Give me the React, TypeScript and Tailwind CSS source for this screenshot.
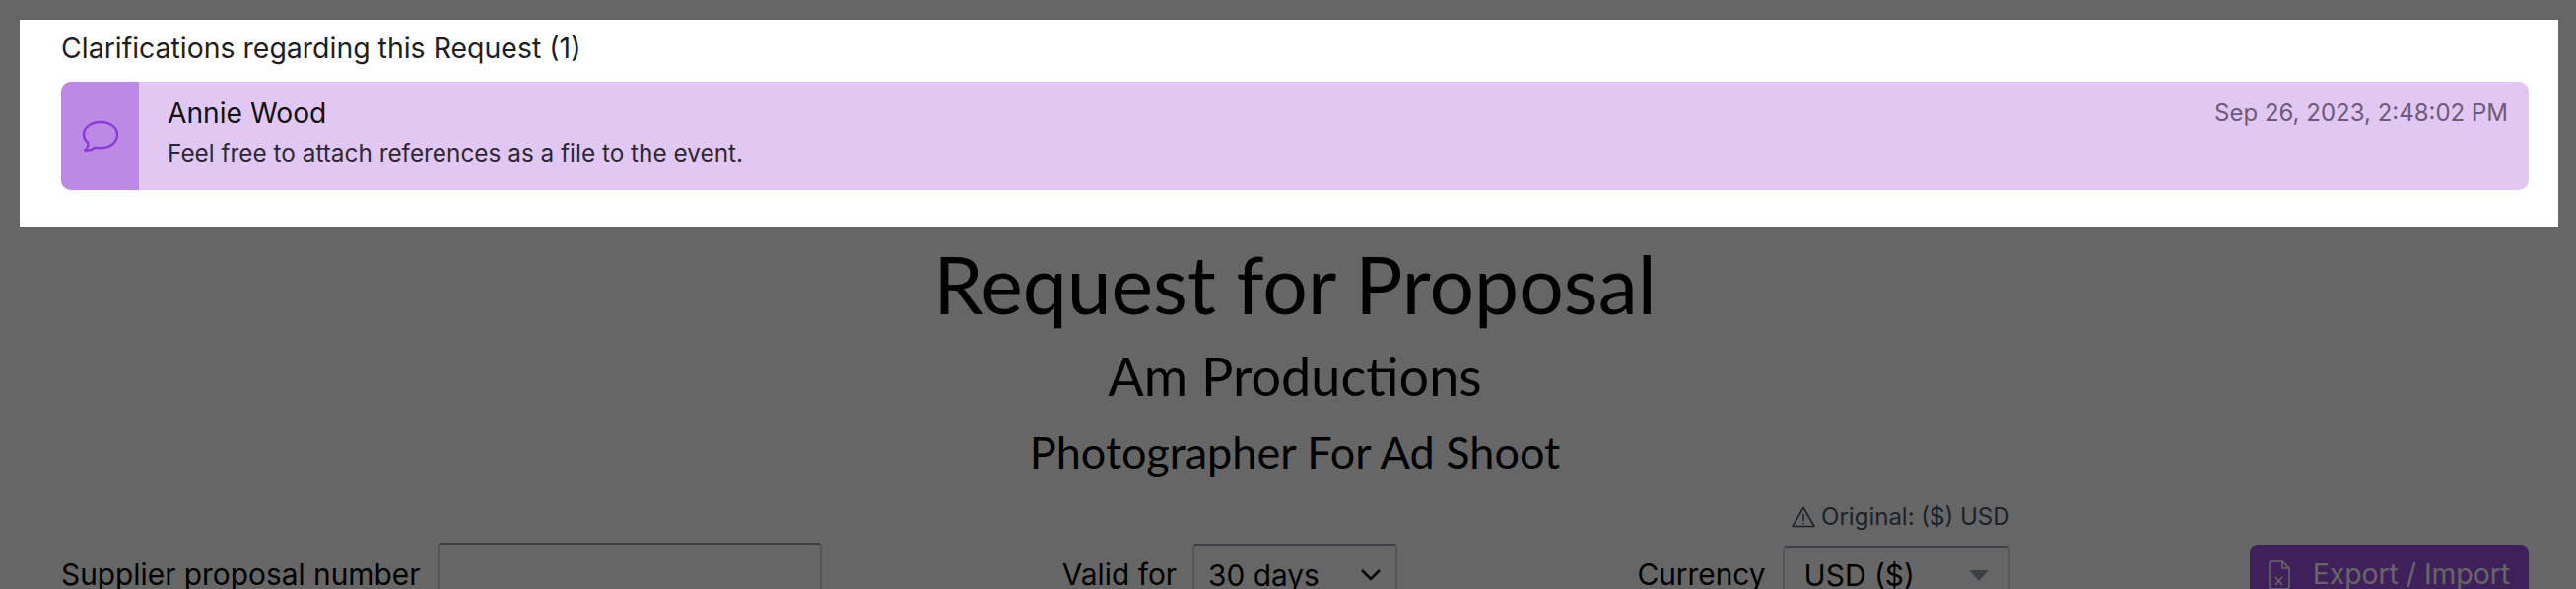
export default function App() {
  return (
    <div className="relative h-[598px] w-[2614px] overflow-hidden bg-white font-['Inter',sans-serif] text-black">
      <main className="pl-[62px] pr-[48px] pt-[242px]">
        <h1 className="text-center font-['Lato',sans-serif] text-[80.5px] leading-[92px]">Request for Proposal</h1>
        <h2 className="mt-[16px] text-center font-['Lato',sans-serif] text-[54px] leading-[64px]">Am Productions</h2>
        <h3 className="mt-[19px] text-center font-['Lato',sans-serif] text-[45px] leading-[52px]">Photographer For Ad Shoot</h3>
        <div className="mt-[25px] flex items-start justify-between">
          <div className="mt-[41px] flex items-start gap-[18px]">
            <span className="mt-[14px] text-[29.850px] leading-[36px]">Supplier proposal number</span>
            <input className="h-[64px] w-[390px] rounded border-2 border-gray-300 border-t-gray-400" />
          </div>
          <div className="mt-[42px] flex items-start gap-[16px]">
            <span className="mt-[13px] text-[29.850px] leading-[36px]">Valid for</span>
            <div className="flex h-[64px] w-[208px] items-center justify-between rounded border-2 border-gray-300 border-t-gray-400 pl-[14px] pr-[14px] text-[29.850px]">
              <span>30 days</span>
              <svg width="22" height="14" viewBox="0 0 22 14" fill="none" stroke="black" strokeWidth="2.5"><path d="M2 2l9 9 9-9" /></svg>
            </div>
          </div>
          <div className="flex flex-col items-end">
            <div className="flex h-[30px] items-center gap-[6px] text-[24px] text-gray-600">
              <svg width="24" height="22" viewBox="0 0 24 22" fill="none" stroke="currentColor" strokeWidth="1.6" strokeLinejoin="round"><path d="M12 1.500 23 20.500H1L12 1.500Z" /><path d="M12 8v7M12 17v1.500" /></svg>
              <span>Original: ($) USD</span>
            </div>
            <div className="mt-[14px] flex items-start gap-[17px]">
              <span className="mt-[11px] text-[29.850px] leading-[36px]">Currency</span>
              <div className="flex h-[60px] w-[231px] items-center justify-between rounded border-2 border-gray-300 border-t-gray-400 pl-[20px] pr-[20px] text-[29.850px]">
                <span>USD ($)</span>
                <span className="h-0 w-0 border-x-[10px] border-t-[11px] border-x-transparent border-t-gray-400" />
              </div>
            </div>
          </div>
          <button className="mt-[43px] flex h-[64px] w-[283px] items-start justify-between rounded-lg bg-[#9d50e1] pl-[19px] pr-[19px] pt-[16px] text-[28.300px] leading-[36px] text-white">
            <svg width="22" height="30" viewBox="0 0 22 30" fill="none" stroke="currentColor" strokeWidth="1.5" strokeLinejoin="round"><path d="M3 1h11l7 7v18a3 3 0 0 1-3 3H3a2 2 0 0 1-2-2V3a2 2 0 0 1 2-2Z" /><path d="M14 1v7h7M7 17l7 8M14 17l-7 8" /></svg>
            <span className="-mt-[4px]">Export / Import</span>
          </button>
        </div>
      </main>
      <div className="absolute inset-0 bg-black/60" />
      <section className="absolute left-[20px] top-[20px] h-[210px] w-[2576px] bg-white pl-[42px] pr-[30px] pt-[11px]">
        <h4 className="text-[28.450px] leading-[36px] text-[#1f1f1f]">Clarifications regarding this Request (1)</h4>
        <div className="mt-[16px] flex h-[110px] overflow-hidden rounded-[10px] bg-[#e1c8f3]">
          <div className="flex w-[79px] items-center justify-center bg-[#bc8ae6]">
            <svg width="38" height="33" viewBox="0 0 38 33" fill="none" stroke="#8a3ad6" strokeWidth="2.4" strokeLinejoin="round">
              <path d="M19 2C9.500 2 2 7.500 2 14.500c0 3.300 1.600 6.200 4.300 8.400.7 2.800-.6 5.600-3.200 7.600 3.800.6 7.800-.6 10.500-2.800 1.700.4 3.500.6 5.400.6 9.500 0 17-5.600 17-13.800C36 7.500 28.500 2 19 2Z" />
            </svg>
          </div>
          <div className="flex min-w-0 flex-1 justify-between pl-[29px] pr-[21px] pt-[14px]">
            <div>
              <div className="text-[28.200px] leading-[36px] text-[#111111]">Annie Wood</div>
              <div className="mt-[6px] text-[24.350px] leading-[32px] text-[#2e2833]">Feel free to attach references as a file to the event.</div>
            </div>
            <div className="text-[24px] leading-[36px] text-[#6f5a7a]">Sep 26, 2023, 2:48:02 PM</div>
          </div>
        </div>
      </section>
    </div>
  );
}
